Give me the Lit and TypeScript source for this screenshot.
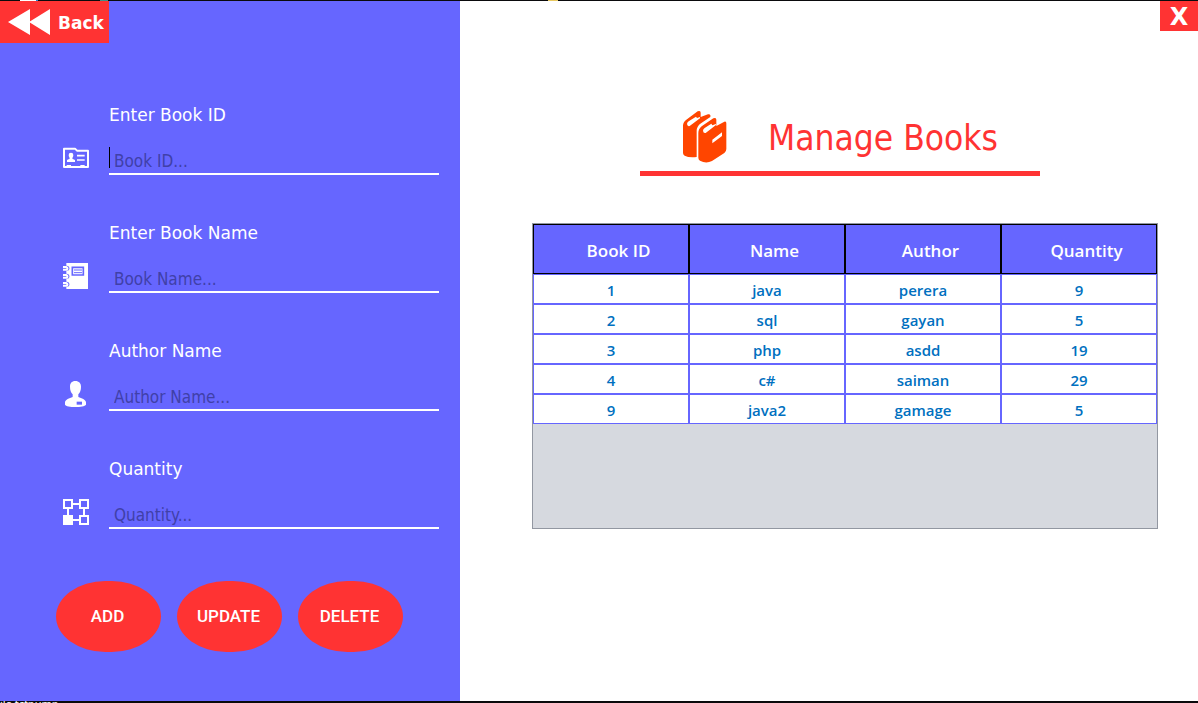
import { LitElement, html, css, svg } from "lit";
import { customElement, property, state } from "lit/decorators.js";

interface Book {
  id: number;
  name: string;
  author: string;
  quantity: number;
}

const idCardIcon = svg`
  <svg viewBox="39 165 78 78" aria-hidden="true">
    <path d="M42 231V176h33l6 6h33v49z" fill="none" stroke="#fff" stroke-width="6" stroke-linejoin="round"/>
    <path d="M50 225h13v6H50zM91 225h13v6H91z" fill="#fff"/>
    <path d="M56 195a7 7 0 0 1 14 0c0 6-3 7-3 11l8 4v6H51v-6l8-4c0-4-3-5-3-11z" fill="#fff"/>
    <path d="M81 197h23M81 210h23" stroke="#fff" stroke-width="5"/>
  </svg>`;

const notebookIcon = svg`
  <svg viewBox="39 159 78 78" aria-hidden="true">
    <path d="M49 159h65v78H49z" fill="#fff"/>
    <g fill="#6666ff"><circle cx="50" cy="175" r="8"/><circle cx="50" cy="199" r="8"/><circle cx="50" cy="223" r="8"/></g>
    <g fill="none" stroke="#fff" stroke-width="6">
      <path d="M39 171h9q7 3 3 8H39"/>
      <path d="M39 195h9q7 3 3 8H39"/>
      <path d="M39 219h9q7 3 3 8H39"/>
    </g>
    <path d="M67 172h33v23H67z" fill="#fff" stroke="#6666ff" stroke-width="5"/>
    <path d="M72 180h24M72 188h24" stroke="#6666ff" stroke-width="3"/>
  </svg>`;

const personIcon = svg`
  <svg viewBox="39 153 78 78" aria-hidden="true">
    <path d="M76 153c11 0 17 7 17 17 0 11-3 18-8 23v8c10 4 22 7 23 16v7c-3 5-17 7-32 7s-29-2-31-7v-7c1-9 13-12 23-16v-8c-5-5-8-12-8-23 0-10 5-17 16-17z" fill="#fff"/>
    <path d="M80 215h16v9H80z" fill="#6666ff"/>
  </svg>`;

const nodesIcon = svg`
  <svg viewBox="39 147 78 78" aria-hidden="true">
    <g fill="none" stroke="#fff" stroke-width="6">
      <path d="M42 150h24v24H42zM90 150h24v24H90zM90 198h24v24H90z"/>
      <path d="M68 162h20M54 176v20M102 176v20M68 210h20"/>
    </g>
    <path d="M39 195h30v30H39z" fill="#fff"/>
  </svg>`;

const booksIcon = svg`
  <svg class="books" viewBox="159 45 138 159" aria-hidden="true">
    <path fill="#ff4500" d="M206 49q9-4 9 4v13l22-8q9-2 7 8l-28 19q-13 9-13 23v78q-23 3-36-4-5-3-5-8V92q0-11 10-18z"/>
    <path fill="#fff" d="M174 87q0-5 5-8l22-14 3 4 9-3v4l-31 23q-7 2-8-6z"/>
    <path fill="#ff4500" d="M253 70q9-4 9 4v19l24-13q6-2 6 5v77q0 7-6 12l-37 24q-18 9-36-1-5-3-5-9v-74q0-12 10-20z"/>
    <path fill="#fff" d="M222 107q0-5 5-8l20-13 3 5 11-4v3l-31 24q-7 2-8-7zM250 134l29-22v11l-29 22z"/>
  </svg>`;

@customElement("text-field")
class TextField extends LitElement {
  @property() label = "";
  @property() hint = "";
  @property({ attribute: false }) icon: unknown = null;
  @property({ type: Boolean }) active = false;

  static styles = css`
    :host {
      display: block;
    }
    .field {
      display: grid;
      grid-template-columns: 26px 1fr;
      column-gap: 20px;
      row-gap: 16px;
    }
    .label {
      grid-column: 2;
      font: 17px/24px "DejaVu Sans", sans-serif;
      color: #fff;
    }
    .icon {
      height: 26px;
      margin-top: 2px;
    }
    .icon svg {
      display: block;
      width: 26px;
      height: 26px;
    }
    .box {
      position: relative;
      display: flex;
    }
    .input {
      box-sizing: border-box;
      width: 100%;
      height: 32px;
      padding: 6px 5px 0;
      border: 0;
      border-bottom: 2px solid #fff;
      border-radius: 0;
      outline: 0;
      background: transparent;
      color: #fff;
      font: 17px "DejaVu Sans Condensed", "DejaVu Sans", sans-serif;
      font-stretch: condensed;
    }
    .input::placeholder {
      color: #4040a8;
      opacity: 1;
    }
    .caret {
      position: absolute;
      left: 0;
      top: 4px;
      width: 1px;
      height: 21px;
      background: #000;
    }
  `;

  render() {
    return html`
      <div class="field">
        <label class="label" for="input">${this.label}</label>
        <span class="icon">${this.icon}</span>
        <div class="box">
          <input class="input" id="input" type="text" placeholder=${this.hint} />
          ${this.active ? html`<span class="caret"></span>` : ""}
        </div>
      </div>
    `;
  }
}

@customElement("app-root")
class AppRoot extends LitElement {
  @state() private books: Book[] = [
    { id: 1, name: "java", author: "perera", quantity: 9 },
    { id: 2, name: "sql", author: "gayan", quantity: 5 },
    { id: 3, name: "php", author: "asdd", quantity: 19 },
    { id: 4, name: "c#", author: "saiman", quantity: 29 },
    { id: 9, name: "java2", author: "gamage", quantity: 5 },
  ];

  static styles = css`
    :host {
      display: grid;
      grid-template-rows: 1px 1fr 2px;
      min-height: 100vh;
      background: #0a0a0c;
    }
    .window {
      display: grid;
      grid-template-columns: 460px 1fr;
    }
    .strip {
      background:
        linear-gradient(#fff, #fff) 20px 0 / 16px 1px no-repeat,
        linear-gradient(#2a7fd4, #2a7fd4) 36px 0 / 2px 1px no-repeat,
        linear-gradient(#3f8f88, #3f8f88) 100px 0 / 8px 1px no-repeat,
        linear-gradient(#e8c860, #e8c860) 548px 0 / 10px 1px no-repeat;
    }
    .side {
      background: #6666ff;
    }
    button {
      border: 0;
      padding: 0;
      background: #ff3333;
      color: #fff;
      cursor: pointer;
    }
    .back {
      display: flex;
      align-items: center;
      gap: 8px;
      height: 42px;
      padding: 0 5px 0 8px;
      font: bold 17px/24px "DejaVu Sans", sans-serif;
    }
    .back-text {
      padding-top: 2px;
    }
    .arrows {
      display: block;
      width: 42px;
      height: 26px;
    }
    .form {
      display: grid;
      gap: 46px;
      padding: 60px 21px 0 63px;
    }
    .actions {
      display: flex;
      gap: 16px;
      padding: 52px 56px 40px;
    }
    .action {
      width: 105px;
      height: 71px;
      padding: 0 2px 2px 0;
      border-radius: 50px / 36px;
      font: 500 17px Roboto, sans-serif;
    }
    .main {
      background: #fff;
    }
    .bar {
      display: flex;
      justify-content: flex-end;
    }
    .close {
      width: 38px;
      height: 30px;
      padding-top: 2px;
      font: bold 24px/28px "DejaVu Sans", sans-serif;
    }
    .content {
      padding: 79px 40px 40px 72px;
    }
    .heading {
      display: flex;
      align-items: center;
      justify-content: center;
      gap: 40px;
      box-sizing: border-box;
      width: 400px;
      height: 66px;
      margin: 0 auto 47px 108px;
      padding-bottom: 8px;
      border-bottom: 5px solid #ff3333;
    }
    .books {
      width: 46px;
      height: 53px;
    }
    .title {
      margin: 0;
      padding-top: 4px;
      color: #ff3333;
      font: 35px/49px "DejaVu Sans Condensed", "DejaVu Sans", sans-serif;
      font-stretch: condensed;
    }
    .frame {
      box-sizing: border-box;
      min-height: 306px;
      border: 1px solid #9297a1;
      background: #d6d9df;
    }
    .table {
      width: 100%;
      table-layout: fixed;
      border-collapse: separate;
      border-spacing: 0;
      font-family: "Open Sans", "Noto Sans", sans-serif;
      text-align: center;
    }
    .table th {
      box-sizing: border-box;
      height: 50px;
      padding: 2px 0 0 15px;
      border: 1px solid #000;
      background: #6666ff;
      color: #fff;
      font-size: 17px;
      font-weight: 600;
    }
    .table td {
      box-sizing: border-box;
      height: 30px;
      padding: 2px 0 0;
      border: 1px solid #6666ff;
      background: #fff;
      color: #0070c0;
      font-size: 15px;
      line-height: 20px;
      font-weight: 600;
    }
    .under {
      overflow: hidden;
      height: 2px;
      color: #fff;
      font: 11px/5px "Noto Sans", sans-serif;
    }
  `;

  render() {
    return html`
      <div class="strip"></div>
      <div class="window">
        <aside class="side">
          <button class="back" type="button">
            <svg class="arrows" viewBox="0 0 42 26" aria-hidden="true">
              <path d="M0 13L22 0V26zM21 13L42 0V26z" fill="#fff" />
            </svg>
            <span class="back-text">Back</span>
          </button>
          <form class="form">
            <text-field label="Enter Book ID" hint="Book ID..." .icon=${idCardIcon} active></text-field>
            <text-field label="Enter Book Name" hint="Book Name..." .icon=${notebookIcon}></text-field>
            <text-field label="Author Name" hint="Author Name..." .icon=${personIcon}></text-field>
            <text-field label="Quantity" hint="Quantity..." .icon=${nodesIcon}></text-field>
          </form>
          <div class="actions">
            ${["ADD", "UPDATE", "DELETE"].map(
              (name) => html`<button class="action" type="button">${name}</button>`
            )}
          </div>
        </aside>
        <main class="main">
          <div class="bar"><button class="close" type="button">X</button></div>
          <div class="content">
            <header class="heading">
              ${booksIcon}
              <h1 class="title">Manage Books</h1>
            </header>
            <div class="frame">
              <table class="table">
                <thead>
                  <tr>
                    <th>Book ID</th>
                    <th>Name</th>
                    <th>Author</th>
                    <th>Quantity</th>
                  </tr>
                </thead>
                <tbody>
                  ${this.books.map(
                    (b) => html`<tr>
                      <td>${b.id}</td>
                      <td>${b.name}</td>
                      <td>${b.author}</td>
                      <td>${b.quantity}</td>
                    </tr>`
                  )}
                </tbody>
              </table>
            </div>
          </div>
        </main>
      </div>
      <div class="under">ile.tcfpump</div>
    `;
  }
}
